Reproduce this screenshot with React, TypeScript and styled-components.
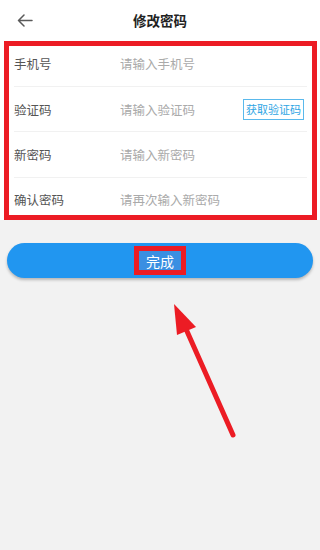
import React from 'react'
import styled, { createGlobalStyle } from 'styled-components'

const GlobalStyle = createGlobalStyle`
  html, body {
    margin: 0;
    padding: 0;
    background: #f2f2f2;
    font-family: 'Noto Sans CJK SC', 'Noto Sans', sans-serif;
  }
`

const Page = styled.div`
  width: 320px;
  height: 550px;
  overflow: hidden;
  background: #f2f2f2;
`

const Panel = styled.div`
  background: #fff;
`

const Header = styled.div`
  height: 41px;
  display: grid;
  grid-template-columns: 48px 1fr 48px;
  align-items: center;
`

const Back = styled.div`
  display: flex;
  align-items: center;
  padding-left: 17px;
  color: #5a5a5a;
`

const Title = styled.div`
  text-align: center;
  font-size: 13.5px;
  font-weight: 700;
  color: #222;
  padding-bottom: 2px;
`

const Form = styled.div`
  position: relative;
  display: flex;
  flex-direction: column;
`

const Row = styled.div<{ h: number; last?: boolean }>`
  height: ${(p) => p.h}px;
  margin: 0 13px 0 14px;
  display: flex;
  align-items: center;
  box-sizing: border-box;
  border-bottom: ${(p) => (p.last ? 'none' : '1px solid #f1f1f1')};
`

const Label = styled.div`
  width: 106px;
  flex-shrink: 0;
  font-size: 12.5px;
  color: #555;
`

const Field = styled.input`
  flex: 1;
  min-width: 0;
  border: none;
  outline: none;
  background: transparent;
  padding: 0;
  font-family: inherit;
  font-size: 12.5px;
  color: #333;
  &::placeholder {
    color: #aaa;
  }
`

const CodeButton = styled.button`
  flex-shrink: 0;
  width: 61px;
  height: 21px;
  margin-right: 3px;
  padding: 0;
  border: 1px solid #5ab9ec;
  background: #fff;
  color: #2ea5e4;
  font-family: inherit;
  font-size: 11px;
  box-sizing: border-box;
`

const Highlight = styled.div`
  position: absolute;
  top: 0;
  left: 4px;
  right: 3px;
  bottom: 0;
  border: 5px solid #ec1c24;
  pointer-events: none;
`

const Submit = styled.button`
  display: flex;
  align-items: center;
  justify-content: center;
  width: 306px;
  height: 35px;
  margin: 23px 7px 0;
  border: none;
  border-radius: 18px;
  background: #2196f0;
  box-shadow: 0 2px 3px rgba(0, 0, 0, 0.25);
  padding: 0;
`

const SubmitText = styled.span`
  display: flex;
  align-items: center;
  justify-content: center;
  width: 42px;
  height: 19px;
  border: 5px solid #ec1c24;
  background: #3a8fe2;
  color: #fff;
  font-family: 'Noto Sans CJK SC', sans-serif;
  font-size: 14px;
  line-height: 1;
`

const Pointer = styled.svg`
  display: block;
  margin-top: 7px;
`

const rows = [
  { label: '手机号', placeholder: '请输入手机号', h: 46 },
  { label: '验证码', placeholder: '请输入验证码', h: 45, code: true },
  { label: '新密码', placeholder: '请输入新密码', h: 46 },
  { label: '确认密码', placeholder: '请再次输入新密码', h: 42 },
]

export default function App() {
  return (
    <Page>
      <GlobalStyle />
      <Panel>
        <Header>
          <Back>
            <svg width="16" height="13" viewBox="0 0 16 13" fill="none">
              <path
                d="M15 6.5H1.5M7 1L1.5 6.5L7 12"
                stroke="currentColor"
                strokeWidth="1.5"
                strokeLinecap="round"
                strokeLinejoin="round"
              />
            </svg>
          </Back>
          <Title>修改密码</Title>
          <div />
        </Header>
        <Form>
          {rows.map((r, i) => (
            <Row key={r.label} h={r.h} last={i === rows.length - 1}>
              <Label>{r.label}</Label>
              <Field placeholder={r.placeholder} />
              {r.code && <CodeButton>获取验证码</CodeButton>}
            </Row>
          ))}
          <Highlight />
        </Form>
      </Panel>
      <Submit>
        <SubmitText>完成</SubmitText>
      </Submit>
      <Pointer width="320" height="160" viewBox="0 0 320 160">
        <line
          x1="186"
          y1="44"
          x2="233"
          y2="150"
          stroke="#ec1c24"
          strokeWidth="5"
          strokeLinecap="round"
        />
        <polygon points="174,19 177,50 196,42" fill="#ec1c24" />
      </Pointer>
    </Page>
  )
}
